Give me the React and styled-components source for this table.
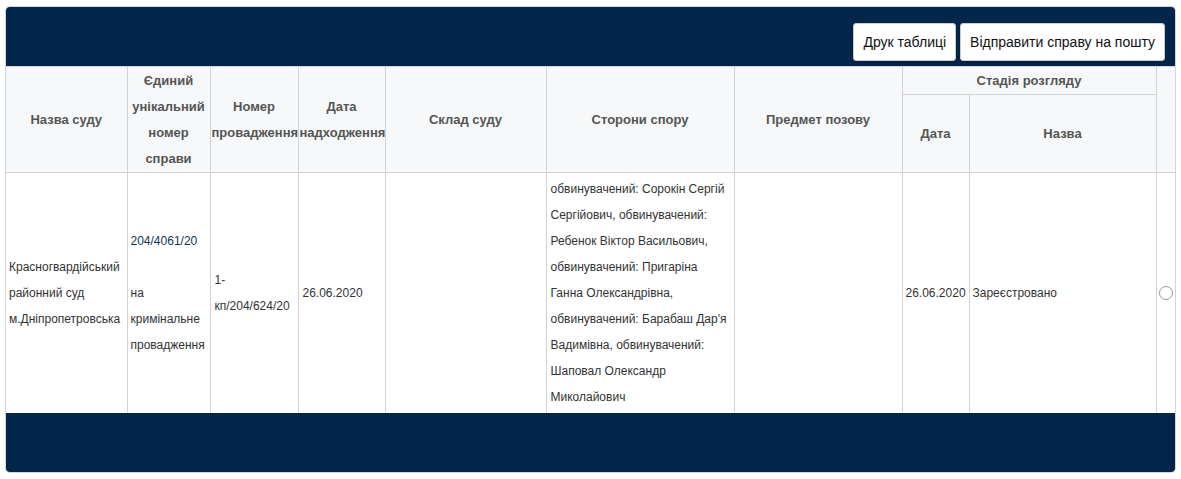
import styled, { createGlobalStyle } from 'styled-components';

const GlobalStyle = createGlobalStyle`
  body {
    margin: 0;
    background: #fff;
    font-family: 'Liberation Sans', Arial, sans-serif;
  }
`;

const Page = styled.div`
  padding: 7px 6px;
`;

const Panel = styled.div`
  border-radius: 4px;
  overflow: hidden;
  box-shadow: 0 0 0 1px rgba(120, 140, 165, 0.35);
`;

const Bar = styled.div`
  background: #02264a;
  height: ${(props) => props.h}px;
  display: flex;
  justify-content: flex-end;
  align-items: flex-end;
  gap: 4px;
  padding: 0 10px 5px 0;
  box-sizing: border-box;
`;

const ActionButton = styled.button`
  height: 38px;
  padding: 0 9px;
  background: #fff;
  border: 1px solid #c9cdd2;
  border-radius: 3px;
  box-shadow: 0 1px 2px rgba(0, 0, 0, 0.35);
  font-family: 'Liberation Sans', Arial, sans-serif;
  font-size: 14px;
  color: #111;
  cursor: pointer;
`;

const Table = styled.table`
  width: 100%;
  table-layout: fixed;
  border-collapse: collapse;
`;

const Head = styled.th`
  background: #f7f8f9;
  border: 1px solid #d3d3d3;
  color: #555;
  font-size: 13px;
  font-weight: bold;
  line-height: 26px;
  padding: 0 1px;
  text-align: center;
  vertical-align: middle;
  height: ${(props) => (props.h ? `${props.h}px` : 'auto')};
  &:first-child {
    border-left: none;
  }
  &:last-child {
    border-right: none;
  }
`;

const Cell = styled.td`
  border: 1px solid #d3d3d3;
  border-bottom: none;
  color: #333;
  font-size: 12px;
  line-height: 26px;
  padding: 2px ${(props) => (props.pad !== undefined ? props.pad : 3)}px;
  vertical-align: middle;
  height: 236px;
  &:first-child {
    border-left: none;
  }
  &:last-child {
    border-right: none;
  }
`;

const CaseLink = styled.a`
  color: #12355a;
  text-decoration: none;
`;

const Radio = styled.span`
  display: block;
  width: 12px;
  height: 12px;
  margin: 0 auto;
  border: 1px solid #9a9a9a;
  border-radius: 50%;
  background: #fff;
`;

const widths = [121, 83, 88, 87, 161, 188, 168, 67, 187, 19];

const App = () => {
  return (
    <Page>
      <GlobalStyle />
      <Panel>
        <Bar h={59}>
          <ActionButton>Друк таблиці</ActionButton>
          <ActionButton>Відправити справу на пошту</ActionButton>
        </Bar>
        <Table>
          <colgroup>
            {widths.map((w, i) => (
              <col key={i} style={{ width: w }} />
            ))}
          </colgroup>
          <thead>
            <tr>
              <Head rowSpan={2}>Назва суду</Head>
              <Head rowSpan={2}>Єдиний унікальний номер справи</Head>
              <Head rowSpan={2}>Номер провадження</Head>
              <Head rowSpan={2}>Дата надходження</Head>
              <Head rowSpan={2}>Склад суду</Head>
              <Head rowSpan={2}>Сторони спору</Head>
              <Head rowSpan={2}>Предмет позову</Head>
              <Head colSpan={2} h={27}>Стадія розгляду</Head>
              <Head rowSpan={2}></Head>
            </tr>
            <tr>
              <Head h={77}>Дата</Head>
              <Head>Назва</Head>
            </tr>
          </thead>
          <tbody>
            <tr>
              <Cell>Красногвардійський районний суд м.Дніпропетровська</Cell>
              <Cell>
                <CaseLink href="#">204/4061/20</CaseLink>
                <br />
                <br />
                на кримінальне провадження
              </Cell>
              <Cell pad={4}>1-кп/204/624/20</Cell>
              <Cell pad={4}>26.06.2020</Cell>
              <Cell></Cell>
              <Cell pad={4}>
                обвинувачений: Сорокін Сергій Сергійович, обвинувачений: Ребенок Віктор Васильович,
                обвинувачений: Пригаріна Ганна Олександрівна, обвинувачений: Барабаш Дар'я Вадимівна,
                обвинувачений: Шаповал Олександр Миколайович
              </Cell>
              <Cell></Cell>
              <Cell>26.06.2020</Cell>
              <Cell>Зареєстровано</Cell>
              <Cell pad={0}>
                <Radio />
              </Cell>
            </tr>
          </tbody>
        </Table>
        <Bar h={59} />
      </Panel>
    </Page>
  );
};

export default App;
